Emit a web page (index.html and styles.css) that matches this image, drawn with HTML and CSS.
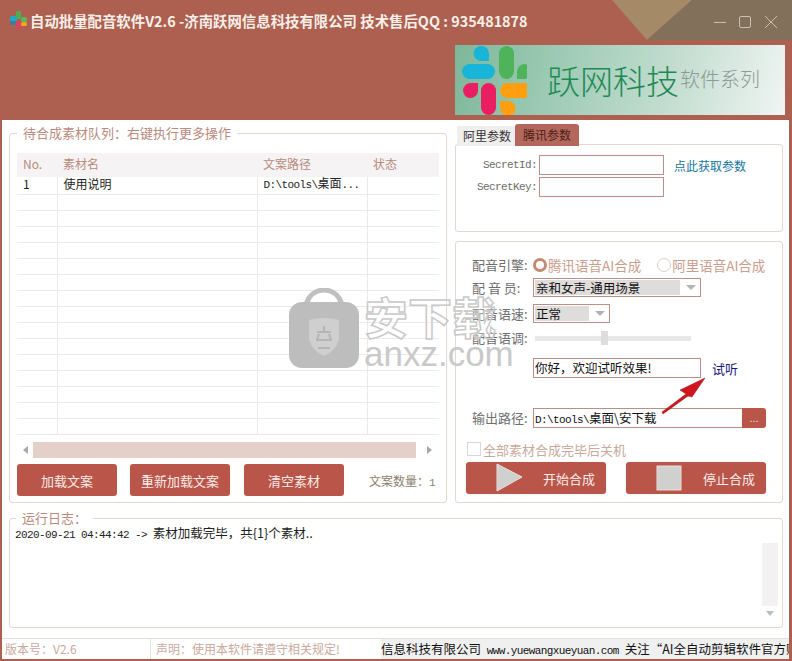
FILE: index.html
```html
<!DOCTYPE html>
<html>
    <head>
        <title>自动批量配音软件</title>
        <link rel="stylesheet" href="styles.css">
    </head>
    <body>
        <div class="window">
            <div class="header">
                <svg class="corner" width="180" height="40" viewBox="0 0 180 40">
                    <polygon points="0,0 35,40 80,0" fill="#a58a68"/>
                    <polygon points="80,0 35,40 180,40 180,0" fill="#83705a"/>
                </svg>
                <div class="title_row">
                    <svg class="app_icon" width="18" height="18" viewBox="0 0 18 18">
                        <rect x="6" y="0" width="5" height="8" rx="1.5" fill="#4caf50"/>
                        <rect x="0" y="5" width="7" height="5" rx="1.5" fill="#1fa8c9"/>
                        <rect x="11" y="6" width="6" height="5" rx="1.5" fill="#5db55f"/>
                        <rect x="0" y="10" width="6" height="4" rx="1.5" fill="#3c7f9a"/>
                        <rect x="6" y="10" width="5" height="8" rx="1.5" fill="#e0405f"/>
                        <rect x="11" y="11" width="6" height="4" rx="1.5" fill="#f5a21c"/>
                    </svg>
                    <span class="app_title">自动批量配音软件V2.6 -济南跃网信息科技有限公司 技术售后QQ : 935481878</span>
                </div>
                <div class="win_btns">
                    <svg width="64" height="14" viewBox="0 0 64 14" fill="none" stroke="#c9c1b6" stroke-width="1">
                        <line x1="0" y1="7.5" x2="12" y2="7.5"/>
                        <rect x="25.5" y="1.5" width="11" height="11" rx="1.5"/>
                        <line x1="51" y1="1" x2="63" y2="13"/>
                        <line x1="63" y1="1" x2="51" y2="13"/>
                    </svg>
                </div>
                <div class="banner">
                    <svg class="banner_logo" width="72" height="70" viewBox="0 0 72 70">
                        <path d="M26 1a7.500 7.500 0 0 0 0 15h8V8.500A7.500 7.500 0 0 0 26 1z" fill="#19b5d8"/>
                        <rect x="7" y="19" width="33" height="15" rx="7.500" fill="#19b5d8"/>
                        <rect x="44" y="1" width="15" height="33" rx="7.500" fill="#4fb35a"/>
                        <path d="M62 34v-8a7.500 7.500 0 1 1 7.500 8z" fill="#4fb35a"/>
                        <path d="M23 38v8a7.500 7.500 0 1 1-7.500-8z" fill="#e91e63"/>
                        <rect x="26" y="38" width="15" height="32" rx="7.500" fill="#e91e63"/>
                        <rect x="45" y="38" width="32" height="15" rx="7.500" fill="#ff9f0f"/>
                        <path d="M45 56h8a7.500 7.500 0 1 1-7.500 7.500z" fill="#ff9f0f"/>
                    </svg>
                    <span class="banner_big">跃网科技</span>
                    <span class="banner_small">软件系列</span>
                </div>
            </div>

            <div class="client">
                <div class="top_area">
                    <fieldset class="group queue">
                        <legend>待合成素材队列：右键执行更多操作</legend>
                        <table class="grid">
                            <tr class="head"><th class="c_no">No.</th><th class="c_name">素材名</th><th class="c_path">文案路径</th><th>状态</th></tr>
                            <tr><td>1</td><td>使用说明</td><td><span class="mono">D:\tools\</span>桌面<span class="mono">...</span></td><td></td></tr>
                            <tr><td></td><td></td><td></td><td></td></tr>
                            <tr><td></td><td></td><td></td><td></td></tr>
                            <tr><td></td><td></td><td></td><td></td></tr>
                            <tr><td></td><td></td><td></td><td></td></tr>
                            <tr><td></td><td></td><td></td><td></td></tr>
                            <tr><td></td><td></td><td></td><td></td></tr>
                            <tr><td></td><td></td><td></td><td></td></tr>
                            <tr><td></td><td></td><td></td><td></td></tr>
                            <tr><td></td><td></td><td></td><td></td></tr>
                            <tr><td></td><td></td><td></td><td></td></tr>
                            <tr><td></td><td></td><td></td><td></td></tr>
                            <tr><td></td><td></td><td></td><td></td></tr>
                            <tr><td></td><td></td><td></td><td></td></tr>
                            <tr><td></td><td></td><td></td><td></td></tr>
                            <tr><td></td><td></td><td></td><td></td></tr>
                        </table>
                        <div class="hscroll">
                            <span class="arrow_left"></span>
                            <span class="thumb"></span>
                            <span class="arrow_right"></span>
                        </div>
                        <div class="queue_btns">
                            <button class="btn" type="button">加载文案</button>
                            <button class="btn" type="button">重新加载文案</button>
                            <button class="btn" type="button">清空素材</button>
                            <span class="count">文案数量：<span class="mono">1</span></span>
                        </div>
                    </fieldset>

                    <div class="side">
                        <div class="tabs">
                            <span class="tab">阿里参数</span>
                            <span class="tab tab_on">腾讯参数</span>
                        </div>
                        <div class="box params">
                            <div class="param_row">
                                <label class="param_label">SecretId:</label>
                                <input class="field param_input" type="text">
                                <a class="get_link">点此获取参数</a>
                            </div>
                            <div class="param_row">
                                <label class="param_label">SecretKey:</label>
                                <input class="field param_input" type="text">
                            </div>
                        </div>

                        <div class="box voice">
                            <div class="v_row engine_row">
                                <span class="v_label">配音引擎:</span>
                                <span class="radio radio_on"></span><span class="radio_text">腾讯语音AI合成</span>
                                <span class="radio radio_second"></span><span class="radio_text">阿里语音AI合成</span>
                            </div>
                            <div class="v_row actor_row">
                                <span class="v_label">配 音 员:</span>
                                <div class="select select_wide"><span class="sel_text">亲和女声-通用场景</span><span class="sel_caret"></span></div>
                            </div>
                            <div class="v_row speed_row">
                                <span class="v_label">配音语速:</span>
                                <div class="select select_short"><span class="sel_text">正常</span><span class="sel_caret"></span></div>
                            </div>
                            <div class="v_row tone_row">
                                <span class="v_label">配音语调:</span>
                                <div class="slider"><span class="slider_thumb"></span></div>
                            </div>
                            <div class="v_row try_row">
                                <div class="try_text">你好，欢迎试听效果!</div>
                                <a class="try_link">试听</a>
                            </div>
                            <div class="v_row out_row">
                                <span class="v_label">输出路径:</span>
                                <div class="out_path"><span class="mono">D:\tools\</span>桌面\安下载</div>
                                <button class="more" type="button">...</button>
                            </div>
                            <div class="v_row off_row">
                                <span class="check"></span><span class="off_text">全部素材合成完毕后关机</span>
                            </div>
                            <div class="run_btns">
                                <button class="btn run" type="button">
                                    <svg width="40" height="32" viewBox="0 0 40 32"><polygon points="5,2 5,29 30,15" fill="#d0d0ce" stroke="#e6dfdc"/></svg>
                                    <span>开始合成</span>
                                </button>
                                <button class="btn run" type="button">
                                    <svg width="40" height="32" viewBox="0 0 40 32"><rect x="5" y="4" width="24" height="24" fill="#d0d0ce" stroke="#e6dfdc"/></svg>
                                    <span>停止合成</span>
                                </button>
                            </div>
                        </div>
                    </div>
                </div>

                <fieldset class="group log">
                    <legend>运行日志：</legend>
                    <div class="log_text"><span class="mono log_time">2020-09-21 04:44:42 -&gt;</span> 素材加载完毕，共{1}个素材..</div>
                    <div class="vscroll"><span class="v_thumb"></span><span class="v_arrow"></span></div>
                </fieldset>

                <div class="status">
                    <div class="st_cell st_ver">版本号：V2.6</div>
                    <div class="st_cell st_note">声明：使用本软件请遵守相关规定!</div>
                    <div class="st_scroll">信息科技有限公司 <span class="mono st_url">www.yuewangxueyuan.com</span> 关注“AI全自动剪辑软件官方账号”</div>
                </div>
            </div>

            <!-- watermark and arrow sit over the window -->
            <div class="mark">
                <svg width="72" height="80" viewBox="0 0 72 80">
                    <path d="M18 16C22 5 30 2 36 2s14 3 18 14" fill="none" stroke="#c0c0c0" stroke-width="5"/>
                    <rect x="1" y="14" width="70" height="66" rx="13" fill="#bdbdbd"/>
                    <path d="M21 32q15-4 30 0v19q-3 12-15 17q-12-5-15-17z" fill="#cfcfcf"/>
                    <path d="M29 44h14M36 38v6M28 52h16M31 46l-2 6M41 46l2 6M30 60h12" fill="none" stroke="#b5b5b5" stroke-width="2"/>
                </svg>
                <div class="mark_words">
                    <div class="mark_zh">安下载</div>
                    <div class="mark_en">anxz.com</div>
                </div>
            </div>
            <svg class="red_arrow" width="48" height="40" viewBox="0 0 48 40">
                <path d="M2 36L26 18L20 14L45 2L32 21L28 20L3 38z" fill="#d0161c" stroke="#8c1d1d" stroke-width="0.5"/>
            </svg>
        </div>
    </body>
</html>
```

FILE: styles.css
```css
* {
    box-sizing: border-box;
}
html, body {
    margin: 0;
    padding: 0;
}
body {
    font-family: "Noto Sans CJK SC", "Liberation Sans", sans-serif;
    font-size: 12px;
    color: #222;
}
.mono {
    font-family: "Liberation Mono", "Noto Sans CJK SC", monospace;
    font-size: 11px;
    letter-spacing: -0.6px;
}
.window {
    position: relative;
    width: 792px;
    height: 661px;
    background: #ad6050;
    padding: 0 3px 2px 2px;
    display: flex;
    flex-direction: column;
    overflow: hidden;
}

/* header */
.header {
    height: 120px;
    flex: none;
    display: flex;
    flex-direction: column;
}
.corner {
    position: absolute;
    top: 0;
    left: 612px;
}
.title_row {
    display: flex;
    align-items: center;
    height: 20px;
    margin: 10px 0 0 8px;
}
.app_icon {
    margin-right: 2px;
}
.app_title {
    color: #f6efe9;
    font-size: 14.4px;
    font-weight: bold;
    white-space: nowrap;
}
.win_btns {
    position: absolute;
    top: 15px;
    left: 714px;
}
.banner {
    position: relative;
    align-self: flex-end;
    width: 330px;
    height: 70px;
    margin: 15px 4px 0 0;
    display: flex;
    align-items: center;
    background: linear-gradient(105deg, #7db79a 0%, #a2cdb8 35%, #c3ddd0 65%, #f0f5f3 100%);
}
.banner_logo {
    flex: none;
}
.banner_big {
    margin-left: 20px;
    font-size: 33px;
    font-weight: 300;
    color: #1d8a55;
    white-space: nowrap;
}
.banner_small {
    margin: 0 0 4px 1px;
    font-size: 20px;
    font-weight: 300;
    color: #8d9a94;
    white-space: nowrap;
}

/* client area */
.client {
    flex: 1;
    background: #fff;
    display: flex;
    flex-direction: column;
}
.top_area {
    display: flex;
    height: 388px;
    flex: none;
}
.group {
    margin: 0;
    padding: 0;
    border: 1px solid #e2d8d3;
    border-radius: 3px;
    min-width: 0;
}
.group legend {
    margin-left: 0;
    padding: 0 6px;
    font-size: 13px;
    line-height: 20px;
    color: #b98a7e;
}
.queue {
    width: 438px;
    height: 380px;
    margin: 3px 0 0 7px;
    padding: 0 7px;
}

/* table */
.grid {
    width: 422px;
    border-collapse: collapse;
    table-layout: fixed;
    margin-top: 10px;
}
.grid td, .grid th {
    height: 16px;
    padding: 0 0 3px 6px;
    border-bottom: 1px solid #eee9e7;
    border-left: 1px solid #eee9e7;
    font-size: 12px;
    line-height: 12px;
    font-weight: normal;
    text-align: left;
    white-space: nowrap;
    overflow: hidden;
}
.grid td:first-child, .grid th:first-child {
    border-left: 0;
}
.grid .head th {
    height: 24px;
    padding-bottom: 3px;
    background: #f5f3f3;
    border: 0;
    color: #b98a7e;
}
.c_no {
    width: 40px;
}
.c_name {
    width: 200px;
}
.c_path {
    width: 110px;
}
.hscroll {
    display: flex;
    align-items: center;
    height: 16px;
    width: 422px;
    margin-top: 7px;
}
.thumb {
    width: 383px;
    height: 16px;
    margin: 0 11px 0 5px;
    background: #e5d0c9;
}
.arrow_left, .arrow_right {
    width: 0;
    height: 0;
    border-top: 4px solid transparent;
    border-bottom: 4px solid transparent;
}
.arrow_left {
    margin-left: 6px;
    border-right: 5px solid #a9a9a9;
}
.arrow_right {
    border-left: 5px solid #a9a9a9;
}
.queue_btns {
    display: flex;
    align-items: center;
    margin-top: 6px;
}
.btn {
    height: 32px;
    border: 0;
    border-radius: 3px;
    background: #b95549;
    color: #f7ece8;
    font-family: inherit;
    font-size: 13px;
    padding: 0;
}
.queue_btns .btn {
    width: 100px;
    margin-right: 13px;
}
.queue_btns .btn:nth-child(2) {
    margin-right: 14px;
}
.count {
    margin-left: 12px;
    color: #8c7f6a;
    font-size: 12px;
}

/* right side */
.side {
    width: 328px;
    margin-left: 8px;
    padding-top: 4px;
}
.tabs {
    display: flex;
    height: 20px;
    margin-left: 2px;
    position: relative;
}
.tab {
    width: 58px;
    height: 20px;
    margin-top: 2px;
    padding-left: 6px;
    font-size: 12px;
    line-height: 19px;
    background: #f0eeee;
    color: #333;
}
.tab_on {
    width: 64px;
    height: 22px;
    margin-top: 0;
    padding-left: 8px;
    line-height: 22px;
    background: #b4675c;
    border-radius: 3px 3px 0 0;
    color: #4a1f18;
}
.box {
    border: 1px solid #e2d8d3;
    border-radius: 3px;
}
.params {
    height: 88px;
    padding-top: 10px;
}
.param_row {
    display: flex;
    align-items: center;
    height: 20px;
    margin-bottom: 2px;
}
.param_label {
    width: 82px;
    text-align: right;
    font-family: "Liberation Mono", monospace;
    font-size: 11px;
    letter-spacing: -0.6px;
    color: #6b6b6b;
    padding-right: 1px;
}
.field {
    border: 1px solid #b98f88;
    background: #fff;
}
.param_input {
    width: 125px;
    height: 20px;
    margin-left: 1px;
}
.get_link {
    margin-left: 10px;
    font-size: 12px;
    color: #14759c;
}
.voice {
    height: 262px;
    margin-top: 9px;
    padding-top: 13px;
    position: relative;
}
.v_row {
    display: flex;
    align-items: center;
    padding-left: 16px;
}
.v_label {
    width: 61px;
    flex: none;
    font-size: 13px;
    line-height: 16px;
    color: #6e6e6e;
    white-space: nowrap;
}
.engine_row {
    height: 20px;
}
.radio {
    width: 14px;
    height: 14px;
    flex: none;
    border-radius: 50%;
    border: 1px solid #d9cfca;
    background: #fff;
}
.radio_on {
    border: 3.5px solid #c48a74;
}
.radio_second {
    margin-left: 16px;
}
.radio_text {
    margin-left: 1px;
    font-size: 13.5px;
    color: #c99e8d;
    white-space: nowrap;
}
.actor_row {
    margin-top: 3px;
    height: 19px;
}
.select {
    display: flex;
    align-items: center;
    height: 19px;
    padding: 1px;
    border: 1px solid #b98f88;
    background: #fff;
}
.select_wide {
    width: 168px;
}
.select_short {
    width: 77px;
}
.sel_text {
    flex: 1;
    height: 15px;
    line-height: 15px;
    background: #dfdcdc;
    padding-left: 1px;
    font-size: 12.5px;
    color: #111;
    white-space: nowrap;
}
.sel_caret {
    width: 0;
    height: 0;
    flex: none;
    margin: 0 3px 0 6px;
    border-top: 5px solid #b3b3b3;
    border-left: 5px solid transparent;
    border-right: 5px solid transparent;
}
.speed_row {
    margin-top: 7px;
    height: 19px;
}
.tone_row {
    margin-top: 6px;
    height: 18px;
}
.slider {
    position: relative;
    width: 156px;
    height: 5px;
    margin-left: 2px;
    background: #e9e7e7;
}
.slider_thumb {
    position: absolute;
    left: 66px;
    top: -5px;
    width: 7px;
    height: 14px;
    background: #dedcdc;
}
.try_row {
    margin-top: 11px;
    height: 20px;
    padding-left: 77px;
}
.try_text {
    width: 168px;
    height: 20px;
    line-height: 17px;
    border: 1px solid #b98f88;
    padding-left: 1px;
    font-size: 12.5px;
    color: #111;
    white-space: nowrap;
}
.try_link {
    margin-left: 11px;
    color: #1a1a7a;
    font-size: 13px;
}
.out_row {
    margin-top: 30px;
    height: 20px;
}
.out_path {
    width: 209px;
    height: 20px;
    line-height: 17px;
    border: 1px solid #b98f88;
    border-right: 0;
    padding-left: 1px;
    font-size: 12.5px;
    color: #111;
    white-space: nowrap;
}
.more {
    width: 24px;
    height: 20px;
    border: 0;
    padding: 0;
    background: #b95549;
    border-radius: 0 3px 3px 0;
    color: #f3e4e0;
    font-size: 11px;
}
.off_row {
    margin-top: 13px;
    height: 16px;
    padding-left: 11px;
}
.check {
    width: 14px;
    height: 14px;
    flex: none;
    border: 1px solid #dcd6d3;
    background: #fff;
}
.off_text {
    margin-left: 2px;
    font-size: 13px;
    color: #c9a99c;
    white-space: nowrap;
}
.run_btns {
    display: flex;
    gap: 20px;
    margin: 5px 0 0 10px;
}
.run {
    width: 140px;
    display: flex;
    align-items: center;
    padding-left: 26px;
}
.run span {
    margin-left: 11px;
    white-space: nowrap;
}

/* log */
.log {
    position: relative;
    height: 120px;
    flex: none;
    margin: 0 6px 0 7px;
    padding: 0 5px;
}
.log legend {
    margin-left: 1px;
}
.log_text {
    margin-top: -3px;
    font-size: 12.5px;
    line-height: 16px;
    white-space: nowrap;
}
.log_time {
    margin-right: 3px;
}
.vscroll {
    position: absolute;
    top: 15px;
    right: 4px;
    height: 73px;
    width: 16px;
    display: flex;
    flex-direction: column;
    justify-content: space-between;
    align-items: center;
}
.v_thumb {
    width: 16px;
    height: 63px;
    background: #f3f1f1;
}
.v_arrow {
    width: 0;
    height: 0;
    border-left: 4px solid transparent;
    border-right: 4px solid transparent;
    border-top: 5px solid #bdbdbd;
}

/* status bar */
.status {
    display: flex;
    height: 21px;
    margin-top: 10px;
    flex: none;
    border-top: 1px solid #e6e0dd;
}
.st_cell {
    line-height: 19px;
    font-size: 12px;
    color: #c9a99c;
    white-space: nowrap;
}
.st_ver {
    width: 149px;
    padding-left: 3px;
    border-right: 1px solid #e6e0dd;
}
.st_note {
    width: 230px;
    padding-left: 5px;
}
.st_scroll {
    flex: 1;
    min-width: 0;
    overflow: hidden;
    background: #f0f0f0;
    line-height: 19px;
    font-size: 12.5px;
    color: #111;
    white-space: nowrap;
}
.st_url {
    margin: 0 3px;
}

/* overlays */
.mark {
    position: absolute;
    left: 288px;
    top: 288px;
    display: flex;
    gap: 4px;
    pointer-events: none;
}
.mark_zh {
    margin-top: 5px;
    font-size: 44px;
    line-height: 46px;
    font-weight: bold;
    color: rgba(255, 255, 255, 0.3);
    -webkit-text-stroke: 1.5px #c9c9c9;
    white-space: nowrap;
}
.mark_en {
    font-family: "Liberation Sans", sans-serif;
    font-size: 35px;
    line-height: 29px;
    color: #c9c9c9;
    white-space: nowrap;
}
.red_arrow {
    position: absolute;
    left: 660px;
    top: 376px;
}
```
